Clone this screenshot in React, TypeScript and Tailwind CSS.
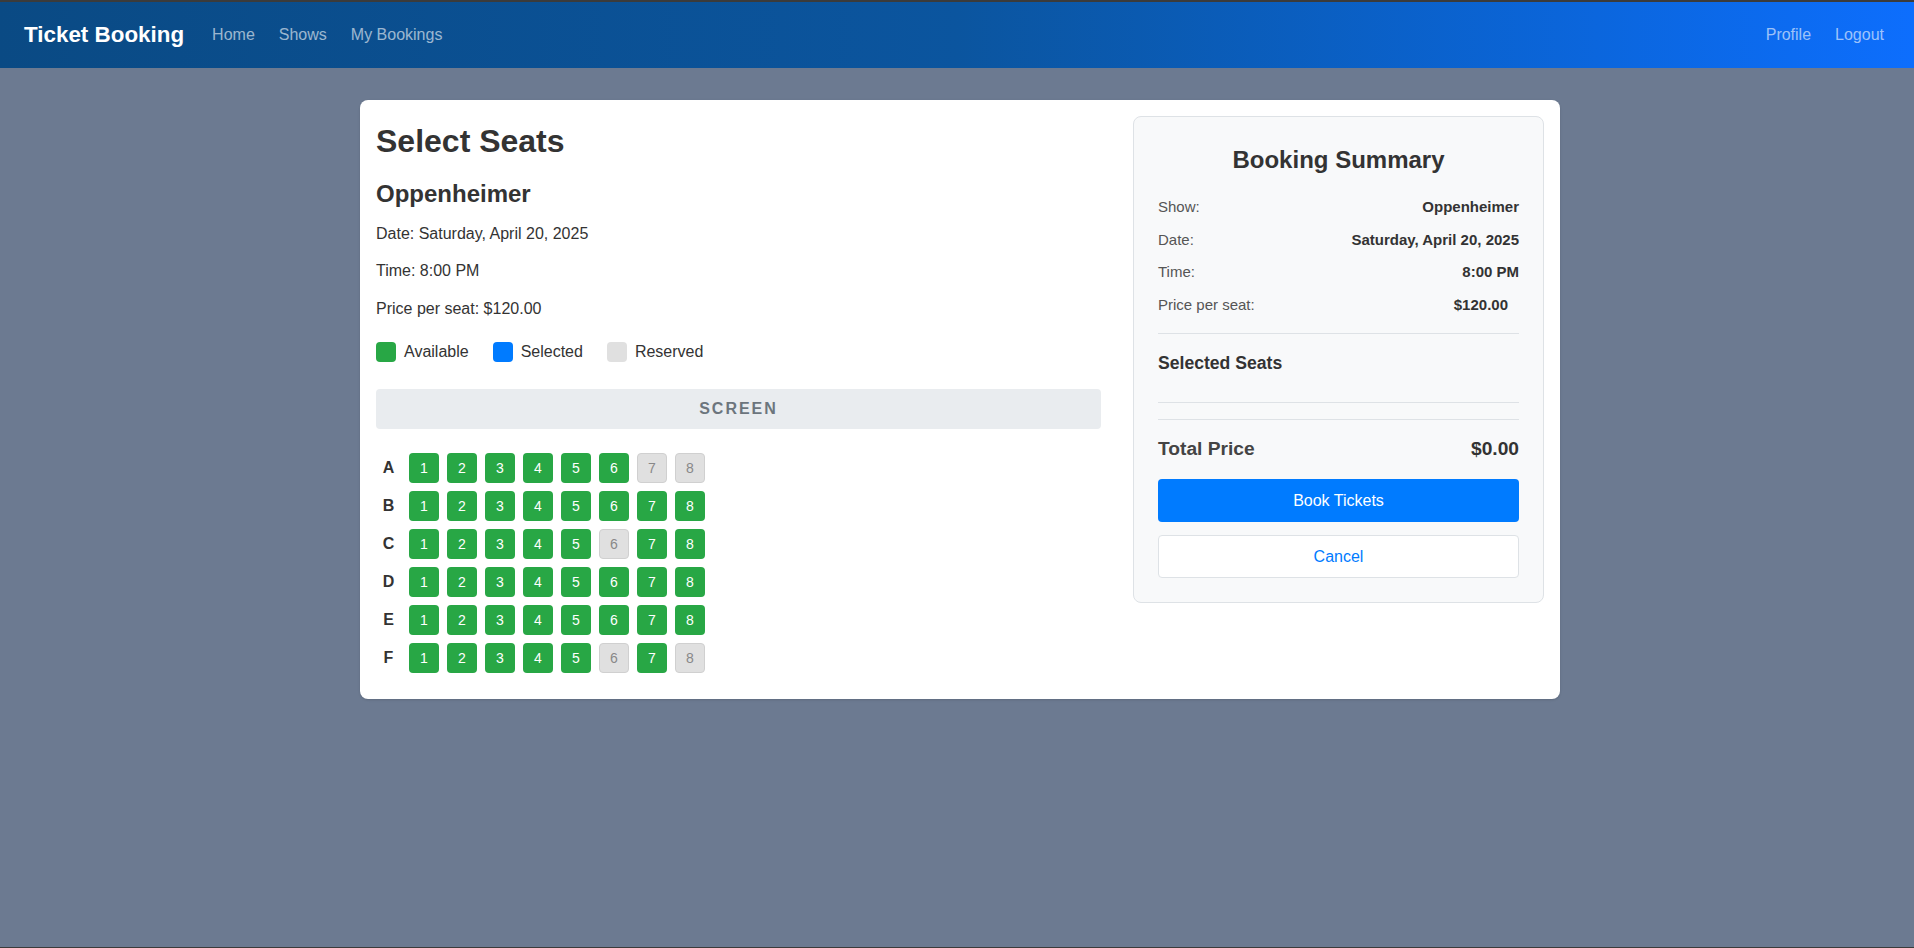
import * as React from "react";

type Row = { label: string; reserved: number[] };

const rows: Row[] = [
    { label: "A", reserved: [7, 8] },
    { label: "B", reserved: [] },
    { label: "C", reserved: [6] },
    { label: "D", reserved: [] },
    { label: "E", reserved: [] },
    { label: "F", reserved: [6, 8] },
];

const show = {
    title: "Oppenheimer",
    date: "Saturday, April 20, 2025",
    time: "8:00 PM",
    price: 120,
};

function SummaryRow({ label, value, className = "" }: { label: string; value: string; className?: string }) {
    return (
        <div className="flex items-center justify-between text-[15px] leading-[22.5px] mb-[10px]">
            <span className="text-[#555]">{label}</span>
            <span className={`font-bold text-[#333] ${className}`}>{value}</span>
        </div>
    );
}

export default function App() {
    const [selected, setSelected] = React.useState<string[]>([]);

    const toggleSeat = (id: string) => {
        setSelected((prev) => (prev.includes(id) ? prev.filter((s) => s !== id) : [...prev, id]));
    };

    const total = selected.length * show.price;

    return (
        <div className="min-h-screen bg-[#6c7a91] border-b border-[#3b3b3b] font-['Liberation_Sans',Arial,sans-serif] text-[#333]">
            <nav className="h-[68px] border-t-2 border-[#3b3b3b] bg-linear-to-r from-[#0a4a84] via-[#0b559f] to-[#0d6efd] flex items-center pl-6 pr-[30px]">
                <a href="#" className="text-[22.4px] font-bold text-white">Ticket Booking</a>
                <div className="flex items-center gap-6 ml-[28px] text-base text-white/60">
                    <a href="#">Home</a>
                    <a href="#">Shows</a>
                    <a href="#">My Bookings</a>
                </div>
                <div className="ml-auto flex items-center gap-6 text-base text-white/60">
                    <a href="#">Profile</a>
                    <a href="#">Logout</a>
                </div>
            </nav>

            <main className="pt-8 pl-[6px]">
                <div className="w-[1200px] mx-auto bg-white rounded-lg shadow-sm p-4 flex items-start gap-8">
                    {/* seat picker */}
                    <div className="flex-1 pt-[2px] pb-[10px]">
                        <h2 className="mt-[4px] text-[32px] leading-[38px] font-bold">Select Seats</h2>
                        <h3 className="mt-[19px] text-2xl leading-[29px] font-bold">{show.title}</h3>
                        <p className="mt-[13.5px] leading-6">Date: {show.date}</p>
                        <p className="mt-[13.5px] leading-6">Time: {show.time}</p>
                        <p className="mt-[13.5px] leading-6">Price per seat: ${show.price.toFixed(2)}</p>

                        <div className="mt-[19px] h-6 flex items-center gap-6">
                            <div className="flex items-center gap-2">
                                <span className="w-5 h-5 rounded bg-[#28a745]" />
                                <span>Available</span>
                            </div>
                            <div className="flex items-center gap-2">
                                <span className="w-5 h-5 rounded bg-[#007bff]" />
                                <span>Selected</span>
                            </div>
                            <div className="flex items-center gap-2">
                                <span className="w-5 h-5 rounded bg-[#e0e0e0]" />
                                <span>Reserved</span>
                            </div>
                        </div>

                        <div className="mt-[25px] h-10 rounded bg-[#e9ecef] flex items-center justify-center text-base font-bold tracking-[2px] text-[#6c757d]">
                            SCREEN
                        </div>

                        <div className="mt-[24.5px] flex flex-col gap-2">
                            {rows.map((row) => (
                                <div key={row.label} className="flex items-center gap-2">
                                    <span className="w-[25px] text-center font-bold">{row.label}</span>
                                    {[1, 2, 3, 4, 5, 6, 7, 8].map((n) => {
                                        const id = `${row.label}${n}`;
                                        const isReserved = row.reserved.includes(n);
                                        const isSelected = selected.includes(id);
                                        return (
                                            <button
                                                key={id}
                                                disabled={isReserved}
                                                onClick={() => toggleSeat(id)}
                                                className={
                                                    isReserved
                                                        ? "w-[30px] h-[30px] rounded text-sm bg-[#e0e0e0] border border-[#d0d0d0] text-[#888]"
                                                        : isSelected
                                                          ? "w-[30px] h-[30px] rounded text-sm bg-[#007bff] text-white"
                                                          : "w-[30px] h-[30px] rounded text-sm bg-[#28a745] text-white"
                                                }
                                            >
                                                {n}
                                            </button>
                                        );
                                    })}
                                </div>
                            ))}
                        </div>
                    </div>

                    {/* booking summary */}
                    <div className="w-[411px] bg-[#f8f9fa] border border-[#dee2e6] rounded-lg p-6">
                        <h3 className="mt-[5px] text-2xl leading-[27px] font-bold text-center">Booking Summary</h3>
                        <div className="mt-[23px]">
                            <SummaryRow label="Show:" value={show.title} />
                            <SummaryRow label="Date:" value={show.date} />
                            <SummaryRow label="Time:" value={show.time} />
                            <SummaryRow label="Price per seat:" value={`$${show.price.toFixed(2)}`} className="pr-[11px]" />
                        </div>
                        <div className="mt-[17px] h-px bg-[#dee2e6]" />
                        <h4 className="mt-[19px] text-[17.6px] leading-[21px] font-bold">Selected Seats</h4>
                        <div className="min-h-[28px] text-[15px]">{selected.join(", ")}</div>
                        <div className="h-px bg-[#dee2e6]" />
                        <div className="mt-4 h-px bg-[#dee2e6]" />
                        <div className="mt-[17px] flex items-center justify-between text-[19.2px] leading-[23px] font-bold">
                            <span className="text-[#444]">Total Price</span>
                            <span>${total.toFixed(2)}</span>
                        </div>
                        <button className="mt-[19px] w-full h-[43px] rounded bg-[#007bff] text-white text-base">
                            Book Tickets
                        </button>
                        <button className="mt-[13px] w-full h-[43px] rounded bg-white border border-[#dee2e6] text-[#007bff] text-base">
                            Cancel
                        </button>
                    </div>
                </div>
            </main>
        </div>
    );
}
